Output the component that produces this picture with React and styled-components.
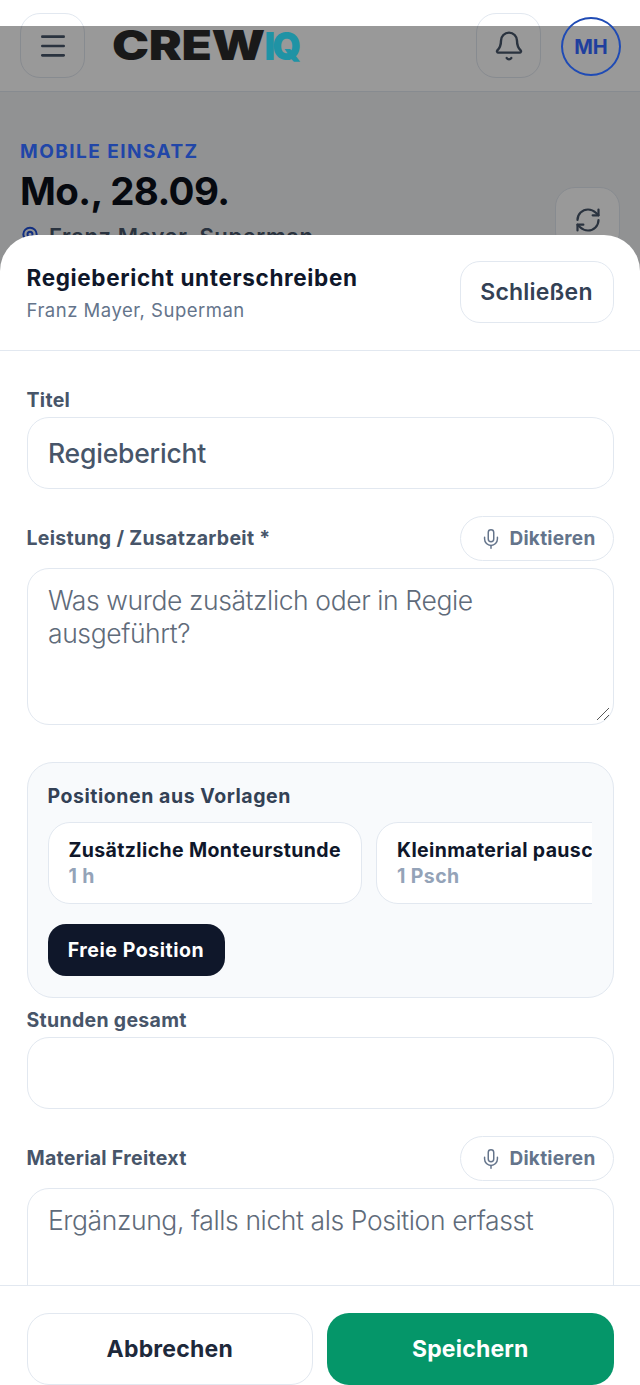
import React from "react";
import styled, { createGlobalStyle } from "styled-components";
import { Menu, Bell, RefreshCw, Mic, MapPin } from "lucide-react";

const Global = createGlobalStyle`
  html, body { margin: 0; padding: 0; background: #fff; }
  body { font-family: Inter, "Noto Sans", sans-serif; }
  * { box-sizing: border-box; }
`;

const Screen = styled.div`
  position: relative;
  width: 640px;
  height: 1385px;
  overflow: hidden;
  background: #f2f3f5;
`;

const Header = styled.header`
  height: 92px;
  padding: 13px 19px 0 20px;
  background: #fff;
  border-bottom: 1px solid #e2e8f0;
  display: flex;
  align-items: flex-start;
`;

const IconButton = styled.button`
  width: 65px;
  height: 65px;
  border: 1.5px solid #e2e8f0;
  border-radius: 20px;
  background: #fff;
  color: #475569;
  padding: 0;
  display: flex;
  align-items: center;
  justify-content: center;
  flex: none;
`;

const Logo = styled.div`
  position: relative;
  z-index: 2;
  margin: 11px 0 0 26.5px;
  height: 42px;
  line-height: 42px;
  font-size: 41px;
  font-weight: 900;
  letter-spacing: -0.3px;
  color: #191919;
  white-space: nowrap;
  transform: scaleX(1.21);
  transform-origin: left center;
`;

const LogoAccent = styled.span`
  display: inline-block;
  color: #1f93a5;
  letter-spacing: -3px;
  font-size: 39px;
  transform: scaleX(0.78);
  transform-origin: left center;
`;

const Spacer = styled.div`
  flex: 1;
`;

const Avatar = styled.div`
  position: relative;
  z-index: 2;
  width: 60px;
  height: 59px;
  margin: 4px 0 0 20px;
  border: 2px solid #1f4bb5;
  border-radius: 50%;
  color: #1f3f9e;
  font-size: 20px;
  font-weight: 700;
  display: flex;
  align-items: center;
  justify-content: center;
  flex: none;
`;

const Main = styled.main`
  padding: 48px 20px 0;
  display: flex;
  justify-content: space-between;
`;

const Eyebrow = styled.div`
  position: relative;
  z-index: 2;
  font-size: 19px;
  line-height: 24px;
  font-weight: 700;
  letter-spacing: 1.45px;
  color: #2146a8;
`;

const DateTitle = styled.h1`
  margin: 4px 0 0;
  font-size: 38.5px;
  line-height: 46px;
  font-weight: 700;
  letter-spacing: -0.6px;
  color: #0b0f1a;
`;

const Location = styled.div`
  margin-top: 10px;
  display: flex;
  align-items: center;
  gap: 9px;
  font-size: 22px;
  line-height: 24px;
  font-weight: 600;
  letter-spacing: 0.6px;
  color: #475569;
  svg { color: #1d4ed8; }
`;

const RefreshButton = styled(IconButton)`
  margin-top: 47px;
`;

const Backdrop = styled.div`
  position: absolute;
  inset: 26px 0 0;
  z-index: 1;
  background: rgba(0, 0, 0, 0.4);
`;

const Sheet = styled.section`
  position: absolute;
  inset: 235px 0 0;
  z-index: 3;
  background: #fff;
  border-radius: 36px 36px 0 0;
  display: flex;
  flex-direction: column;
  overflow: hidden;
`;

const SheetHead = styled.div`
  height: 116px;
  flex: none;
  padding: 26px 26.5px 0;
  border-bottom: 1.5px solid #e2e8f0;
  display: flex;
  justify-content: space-between;
  align-items: flex-start;
`;

const SheetTitle = styled.h2`
  margin: 2px 0 0;
  font-size: 22.5px;
  line-height: 30px;
  font-weight: 700;
  letter-spacing: 0.65px;
  color: #0f172a;
`;

const SheetSub = styled.div`
  margin-top: 4px;
  font-size: 18.5px;
  line-height: 26px;
  letter-spacing: 0.5px;
  color: #64748b;
`;

const CloseButton = styled.button`
  width: 154px;
  height: 62px;
  border: 1.5px solid #e2e8f0;
  border-radius: 20px;
  background: #fff;
  font: 600 23px Inter, sans-serif;
  letter-spacing: 0.2px;
  color: #334155;
`;

const Body = styled.div`
  flex: 1;
  min-height: 0;
  overflow: hidden;
  padding: 36px 26.5px 0;
`;

const Field = styled.div`
  margin-bottom: ${(p) => p.$gap ?? 26}px;
`;

const Label = styled.div`
  font-size: 19.5px;
  line-height: 26px;
  font-weight: 700;
  letter-spacing: 0.3px;
  color: #475569;
`;

const LabelRow = styled.div`
  height: 45px;
  margin-bottom: 7px;
  padding-right: 0;
  display: flex;
  align-items: center;
  justify-content: space-between;
  & > ${Label} { margin-top: -2px; }
`;

const TextBox = styled.div`
  height: 72px;
  margin-top: ${(p) => p.$top ?? 4}px;
  padding: 0 20.5px;
  border: 1.5px solid #e2e8f0;
  border-radius: 22px;
  background: #fff;
  display: flex;
  align-items: center;
  font-size: 26.5px;
  font-weight: 500;
  letter-spacing: -0.2px;
  color: #475569;
`;

const TextArea = styled.div`
  position: relative;
  height: ${(p) => p.$height}px;
  padding: 15px 20.5px;
  border: 1.5px solid #e2e8f0;
  border-radius: 22px;
  background: #fff;
  font-size: 26.5px;
  font-weight: 300;
  line-height: 33px;
  letter-spacing: -0.4px;
  color: #5f6b7a;
`;

const Grip = styled.svg`
  position: absolute;
  right: 2px;
  bottom: 2px;
`;

const DictateButton = styled.button`
  width: 154px;
  height: 45px;
  padding: 0 0 0 2px;
  border: 1.5px solid #e2e8f0;
  border-radius: 23px;
  background: #fff;
  display: flex;
  align-items: center;
  justify-content: center;
  gap: 8px;
  font: 700 19px Inter, sans-serif;
  letter-spacing: 0.25px;
  color: #64748b;
`;

const TemplatePanel = styled.div`
  height: 236px;
  padding: 20px 21px 0 20px;
  border: 1.5px solid #e2e8f0;
  border-radius: 26px;
  background: #f8fafc;
`;

const PanelTitle = styled.div`
  font-size: 19.5px;
  line-height: 26px;
  font-weight: 700;
  letter-spacing: 0.55px;
  color: #334155;
`;

const TemplateRow = styled.div`
  margin-top: 13px;
  display: flex;
  gap: 14px;
  overflow: hidden;
`;

const TemplateCard = styled.div`
  flex: none;
  height: 82px;
  padding: 14px 20px 0;
  border: 1.5px solid #e2e8f0;
  border-radius: 22px;
  background: #fff;
  white-space: nowrap;
`;

const TemplateName = styled.div`
  font-size: 19.5px;
  line-height: 26px;
  font-weight: 700;
  letter-spacing: 0.37px;
  color: #0f172a;
`;

const TemplateQty = styled.div`
  font-size: 19.5px;
  line-height: 26px;
  font-weight: 700;
  letter-spacing: 0.4px;
  color: #94a3b8;
`;

const DarkButton = styled.button`
  display: block;
  margin-top: 20px;
  width: 177px;
  height: 52px;
  border: 0;
  border-radius: 18px;
  background: #0f172a;
  color: #fff;
  font: 700 19.5px Inter, sans-serif;
  letter-spacing: 0.55px;
`;

const Footer = styled.div`
  flex: none;
  height: 100px;
  padding: 27px 26.5px 0;
  border-top: 1.5px solid #e2e8f0;
  background: #fff;
  display: grid;
  grid-template-columns: 1fr 1fr;
  gap: 14px;
`;

const FooterButton = styled.button`
  height: 72px;
  border: ${(p) => (p.$primary ? "0" : "1.5px solid #e2e8f0")};
  border-radius: 22px;
  background: ${(p) => (p.$primary ? "#059669" : "#fff")};
  color: ${(p) => (p.$primary ? "#fff" : "#1e293b")};
  font: 700 23px Inter, sans-serif;
  letter-spacing: 0.2px;
`;

function Dictate() {
  return (
    <DictateButton>
      <Mic size={22} strokeWidth={1.6} />
      Diktieren
    </DictateButton>
  );
}

export default function App() {
  return (
    <Screen>
      <Global />
      <Header>
        <IconButton>
          <Menu size={32} strokeWidth={2} />
        </IconButton>
        <Logo>
          CREW<LogoAccent>IQ</LogoAccent>
        </Logo>
        <Spacer />
        <IconButton>
          <Bell size={32} strokeWidth={1.8} />
        </IconButton>
        <Avatar>MH</Avatar>
      </Header>
      <Main>
        <div>
          <Eyebrow>MOBILE EINSATZ</Eyebrow>
          <DateTitle>Mo., 28.09.</DateTitle>
          <Location>
            <MapPin size={20} strokeWidth={2.4} />
            Franz Mayer, Superman
          </Location>
        </div>
        <RefreshButton>
          <RefreshCw size={28} strokeWidth={1.9} />
        </RefreshButton>
      </Main>
      <Backdrop />
      <Sheet>
        <SheetHead>
          <div>
            <SheetTitle>Regiebericht unterschreiben</SheetTitle>
            <SheetSub>Franz Mayer, Superman</SheetSub>
          </div>
          <CloseButton>Schließen</CloseButton>
        </SheetHead>
        <Body>
          <Field $gap={27}>
            <Label>Titel</Label>
            <TextBox>Regiebericht</TextBox>
          </Field>
          <Field $gap={37}>
            <LabelRow>
              <Label>Leistung / Zusatzarbeit *</Label>
              <Dictate />
            </LabelRow>
            <TextArea $height={157}>
              Was wurde zusätzlich oder in Regie ausgeführt?
              <Grip width="16" height="16" viewBox="0 0 16 16" fill="none" stroke="#555" strokeWidth="1">
                <path d="M2 14 14 2M9 14l5-5" />
              </Grip>
            </TextArea>
          </Field>
          <Field $gap={9}>
            <TemplatePanel>
              <PanelTitle>Positionen aus Vorlagen</PanelTitle>
              <TemplateRow>
                <TemplateCard>
                  <TemplateName>Zusätzliche Monteurstunde</TemplateName>
                  <TemplateQty>1 h</TemplateQty>
                </TemplateCard>
                <TemplateCard>
                  <TemplateName>Kleinmaterial pauschal</TemplateName>
                  <TemplateQty>1 Psch</TemplateQty>
                </TemplateCard>
              </TemplateRow>
              <DarkButton>Freie Position</DarkButton>
            </TemplatePanel>
          </Field>
          <Field $gap={27}>
            <Label>Stunden gesamt</Label>
            <TextBox />
          </Field>
          <Field $gap={0}>
            <LabelRow>
              <Label>Material Freitext</Label>
              <Dictate />
            </LabelRow>
            <TextArea $height={157}>Ergänzung, falls nicht als Position erfasst</TextArea>
          </Field>
        </Body>
        <Footer>
          <FooterButton>Abbrechen</FooterButton>
          <FooterButton $primary>Speichern</FooterButton>
        </Footer>
      </Sheet>
    </Screen>
  );
}
